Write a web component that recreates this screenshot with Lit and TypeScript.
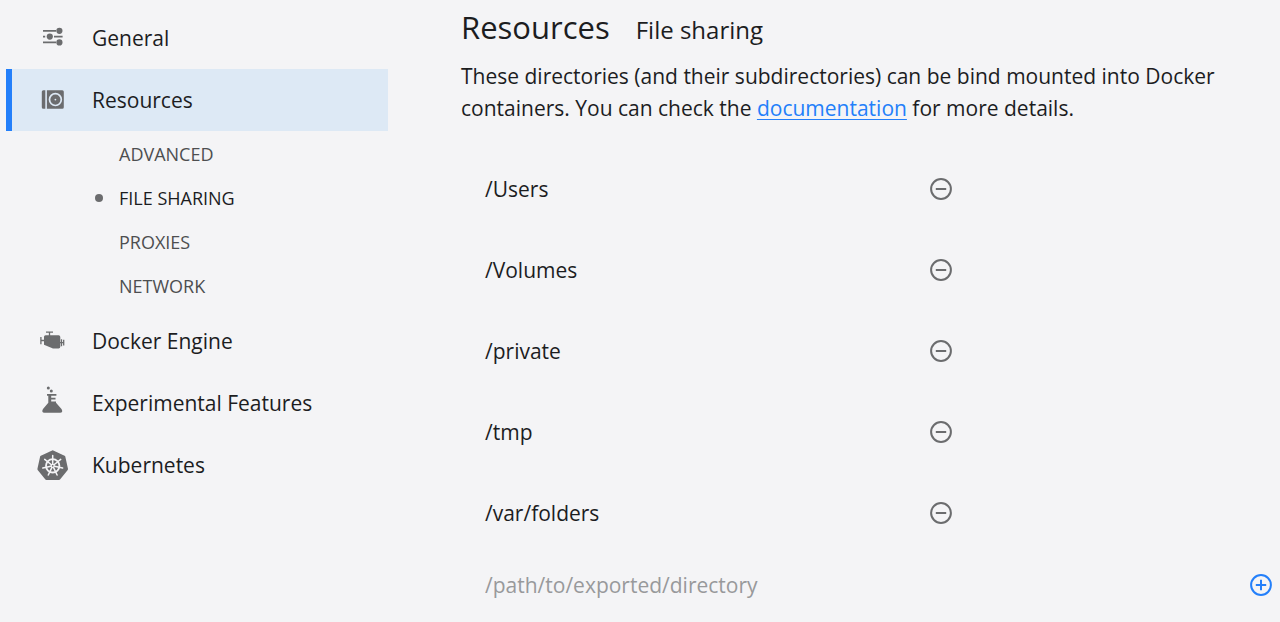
import { LitElement, html, css, svg } from "lit";
import { customElement, state } from "lit/decorators.js";
import { classMap } from "lit/directives/class-map.js";

const icons = {
  general: svg`
    <g stroke="currentColor" stroke-width="1.7" fill="none">
      <path d="M7 8.800h13M7 14.600h2.200M18 14.600h8.600M7 20.400h13"/>
    </g>
    <g fill="currentColor">
      <circle cx="23.400" cy="8.800" r="3.100"/><circle cx="13.800" cy="14.600" r="3.100"/><circle cx="23.400" cy="20.400" r="3.100"/>
    </g>`,
  resources: svg`
    <path fill="currentColor" d="M7.300 6.200h2v18.600h-2A1.500 1.500 0 0 1 5.800 23.300V7.700A1.500 1.500 0 0 1 7.300 6.200zM10.900 6.200h15.400a1.500 1.500 0 0 1 1.500 1.500v15.600a1.500 1.500 0 0 1-1.500 1.500H10.900z"/>
    <circle cx="19.400" cy="15.600" r="5.900" fill="none" stroke="#dde9f5" stroke-width="1.700"/>
    <circle cx="19.400" cy="15.600" r="0.900" fill="#dde9f5"/>`,
  engine: svg`
    <path fill="currentColor" d="M9.600 10.200h13q1.700 0 1.700 1.700v9.900q0 1.700-1.700 1.700h-5.600L8 19.800v-8q0-1.600 1.600-1.600z"/>
    <path fill="none" stroke="currentColor" stroke-width="1.300" d="M10 7.200h7M13.500 7.200V11M4.900 12v7.200M5 15.500h4M24 17.600h3.500M25.500 14.200v7M27.700 14.800v5.600"/>`,
  flask: svg`
    <g fill="currentColor" transform="translate(0 -2.800)">
      <circle cx="12.300" cy="3.900" r="1.500"/><circle cx="15.300" cy="6.700" r="1.500"/>
      <path d="M11 9.800h9.400v1.700h-5.200v2H19.500v1.700h-4.300v2H20V18.500L25.500 24.800q2 3.700-1.400 3.700H8.400q-3.300 0-1.400-3.700L12.300 18.500v-7H11z"/>
    </g>`,
  kubernetes: svg`
    <g transform="translate(.7 .3)">
      <path fill="currentColor" stroke="currentColor" stroke-width="2.600" stroke-linejoin="round" d="M16 2.300 27.300 7.600 30 19.800 22.300 29.500H9.700L2 19.800 4.700 7.600z"/>
      <g fill="none" stroke="#f4f4f6">
        <circle cx="16" cy="16.500" r="6.700" stroke-width="1.800"/>
        <path stroke-width="1.500" stroke-linecap="round" d="M16 14.500V6.300M17.600 15.200 24 10.100M17.900 16.900 25.900 18.800M16.900 18.300 20.400 25.700M15.100 18.300 11.600 25.700M14.100 16.900 6.100 18.800M14.400 15.200 8 10.100"/>
        <circle cx="16" cy="16.500" r="1.500" stroke-width="1.200"/>
      </g>
    </g>`,
};

interface NavEntry {
  label: string;
  icon: keyof typeof icons;
  children?: string[];
}

const NAV: NavEntry[] = [
  { label: "General", icon: "general" },
  { label: "Resources", icon: "resources", children: ["Advanced", "File sharing", "Proxies", "Network"] },
  { label: "Docker Engine", icon: "engine" },
  { label: "Experimental Features", icon: "flask" },
  { label: "Kubernetes", icon: "kubernetes" },
];

@customElement("settings-nav")
export class SettingsNav extends LitElement {
  static styles = css`
    :host { display: block; }
    ul { list-style: none; margin: 0; padding: 0; }
    .item {
      display: flex;
      align-items: center;
      gap: 24px;
      height: 62px;
      padding-left: 24px;
      border-left: 6px solid transparent;
      color: #1c1d1f;
      font-size: 21px;
      line-height: 32px;
      text-decoration: none;
    }
    .item.active { background: #dde9f5; border-left-color: #237ffa; }
    .icon { width: 32px; height: 32px; flex: none; color: #6b6c6e; overflow: visible; }
    .sub { padding: 1px 0 2px; }
    .child {
      display: flex;
      align-items: center;
      gap: 16px;
      height: 44px;
      padding-left: 89px;
      color: #4d4e50;
      font-size: 18px;
      text-decoration: none;
      text-transform: uppercase;
    }
    .child.active { color: #1c1d1f; }
    .dot { width: 8px; height: 8px; border-radius: 50%; }
    .child.active .dot { background: #6b6c6e; }
  `;

  render() {
    return html`<nav aria-label="Settings">
      <ul>
        ${NAV.map((n) => html`<li>
          <a href="#" class=${classMap({ item: true, active: n.label === "Resources" })}>
            <svg class="icon" viewBox="0 0 32 32" aria-hidden="true">${icons[n.icon]}</svg>
            <span>${n.label}</span>
          </a>
          ${n.children
            ? html`<ul class="sub">
                ${n.children.map((c) => html`<li>
                  <a href="#" class=${classMap({ child: true, active: c === "File sharing" })}>
                    <span class="dot"></span><span>${c}</span>
                  </a>
                </li>`)}
              </ul>`
            : ""}
        </li>`)}
      </ul>
    </nav>`;
  }
}

@customElement("file-sharing")
export class FileSharing extends LitElement {
  static styles = css`
    :host { display: block; color: #1c1d1f; font-size: 21px; line-height: 32px; }
    .head { display: flex; align-items: baseline; gap: 26px; }
    h1, h2, p { margin: 0; font-weight: 400; }
    h1 { font-size: 31px; line-height: 44px; }
    h2 { font-size: 24px; line-height: 44px; }
    p { padding: 8px 24px 0 0; }
    .link { color: #237ffa; text-decoration: underline; text-decoration-thickness: 1px; text-underline-offset: 3px; }
    ul { list-style: none; margin: 24px 0 0; padding: 0; width: 60%; }
    .row { display: flex; align-items: center; justify-content: space-between; height: 81px; padding-left: 24px; }
    .add { display: flex; align-items: center; gap: 16px; height: 64px; padding: 0 8px 0 24px; }
    input {
      flex: 1;
      min-width: 0;
      height: 40px;
      padding: 0;
      border: 0;
      outline: 0;
      background: none;
      color: inherit;
      font: inherit;
    }
    input::placeholder { color: #98999b; opacity: 1; }
    button { display: flex; padding: 0; border: 0; background: none; color: #6b6c6e; cursor: pointer; }
    .plus { color: #237ffa; }
    svg { width: 22px; height: 22px; fill: none; stroke: currentColor; stroke-width: 2; }
  `;

  @state() private paths = ["/Users", "/Volumes", "/private", "/tmp", "/var/folders"];
  @state() private draft = "";

  private remove(path: string) {
    this.paths = this.paths.filter((p) => p !== path);
  }

  private add(e: Event) {
    e.preventDefault();
    const value = this.draft.trim();
    if (value && !this.paths.includes(value)) this.paths = [...this.paths, value];
    this.draft = "";
  }

  render() {
    return html`
      <div class="head"><h1>Resources</h1><h2>File sharing</h2></div>
      <p>These directories (and their subdirectories) can be bind mounted into Docker containers. You can check the <a class="link" href="#">documentation</a> for more details.</p>
      <ul>
        ${this.paths.map((p) => html`<li class="row">
          <span>${p}</span>
          <button type="button" aria-label="Remove ${p}" @click=${() => this.remove(p)}>
            <svg viewBox="0 0 22 22"><circle cx="11" cy="11" r="9.900"/><path d="M5.800 11h10.400"/></svg>
          </button>
        </li>`)}
      </ul>
      <form class="add" @submit=${this.add}>
        <input type="text" aria-label="Directory to export" placeholder="/path/to/exported/directory"
          .value=${this.draft} @input=${(e: Event) => (this.draft = (e.target as HTMLInputElement).value)} />
        <button class="plus" type="submit" aria-label="Add directory">
          <svg viewBox="0 0 22 22"><circle cx="11" cy="11" r="9.900"/><path d="M5.800 11h10.400M11 5.800v10.400"/></svg>
        </button>
      </form>
    `;
  }
}

@customElement("app-root")
export class AppRoot extends LitElement {
  static styles = css`
    :host {
      display: grid;
      grid-template-columns: 388px minmax(0, 1fr);
      column-gap: 73px;
      box-sizing: border-box;
      min-height: 100vh;
      background: #f4f4f6;
      font-family: "Open Sans", "Noto Sans", sans-serif;
    }
    .nav { padding: 7px 0 0 6px; }
    .main { padding-top: 5px; }
  `;

  render() {
    return html`
      <settings-nav class="nav"></settings-nav>
      <file-sharing class="main"></file-sharing>
    `;
  }
}
